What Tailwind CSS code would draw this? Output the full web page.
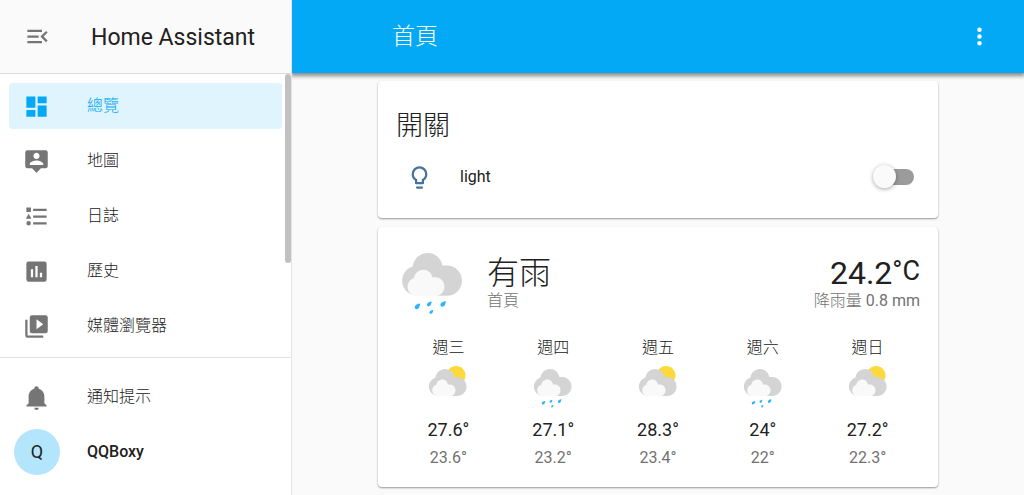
<!DOCTYPE html>
<html lang="zh-Hant">

<head>
    <meta charset="UTF-8">
    <meta name="viewport" content="width=device-width, initial-scale=1.0">
    <title>首頁 - Home Assistant</title>
    <script src="https://cdn.jsdelivr.net/npm/@tailwindcss/browser@4"></script>
</head>

<body class="h-screen flex overflow-hidden bg-[#fafafa] text-[#212121] text-base font-['Roboto','Noto_Sans_CJK_TC',sans-serif]">

    <!-- Weather icons -->
    <svg class="hidden">
        <symbol id="clouds" viewBox="0 0 17 17">
            <path fill="#d4d4d4" d="m3.8863 5.035c-0.54892 0.16898-1.04 0.46637-1.4372 0.8636-0.63077 0.63041-1.0206 1.4933-1.0206 2.455 0 1.9251 1.5589 3.4682 3.4837 3.4682h6.9688c1.9251 0 3.484-1.5981 3.484-3.5232 0-1.9251-1.5589-3.5232-3.484-3.5232h-1.0834c-0.25294-1.6916-1.6986-2.9083-3.4463-2.9083-1.7995 0-3.2805 1.4153-3.465 3.1679" />
            <path fill="#f9f9f9" d="m4.1996 7.6995c-0.33902 0.10407-0.64276 0.28787-0.88794 0.5334-0.39017 0.38982-0.63147 0.92322-0.63147 1.5176 0 1.1896 0.96414 2.1431 2.1537 2.1431h4.3071c1.1896 0 2.153-0.98742 2.153-2.1777 0-1.1896-0.96344-2.1777-2.153-2.1777h-0.66992c-0.15593-1.0449-1.0499-1.7974-2.1297-1.7974-1.112 0-2.0274 0.87524-2.1417 1.9586" />
        </symbol>
        <symbol id="rainy" viewBox="0 0 17 17">
            <use href="#clouds" />
            <g fill="#30b3ff">
                <path d="m5.2852 14.734c-0.22401 0.24765-0.57115 0.2988-0.77505 0.11395-0.20391-0.1845-0.18732-0.53481 0.036689-0.78281 0.14817-0.16298 0.59126-0.32914 0.87559-0.42369 0.12453-0.04092 0.22684 0.05186 0.19791 0.17956-0.065617 0.2921-0.18732 0.74965-0.33514 0.91299" />
                <path d="m11.257 14.163c-0.22437 0.24765-0.57115 0.2988-0.77505 0.11395-0.2039-0.1845-0.18768-0.53481 0.03669-0.78281 0.14817-0.16298 0.59126-0.32914 0.8756-0.42369 0.12453-0.04092 0.22684 0.05186 0.19791 0.17956-0.06562 0.2921-0.18732 0.74965-0.33514 0.91299" />
                <path d="m8.432 15.878c-0.15452 0.17039-0.3937 0.20567-0.53446 0.07867-0.14041-0.12735-0.12876-0.36865 0.025753-0.53975 0.10195-0.11218 0.40711-0.22684 0.60325-0.29175 0.085725-0.02858 0.15628 0.03563 0.13652 0.12382-0.045508 0.20108-0.12912 0.51647-0.23107 0.629" />
                <path d="m7.9991 14.118c-0.19226 0.21237-0.49001 0.25612-0.66499 0.09737-0.17462-0.15804-0.16051-0.45861 0.03175-0.67098 0.12665-0.14005 0.50729-0.28293 0.75071-0.36336 0.10689-0.03563 0.19473 0.0441 0.17004 0.15346-0.056092 0.25082-0.16051 0.64347-0.28751 0.78352" />
            </g>
        </symbol>
        <symbol id="partlycloudy" viewBox="0 0 17 17">
            <path fill="#fdd93c" d="m14.981 4.2112c0 1.9244-1.56 3.4844-3.484 3.4844-1.9244 0-3.4844-1.56-3.4844-3.4844s1.56-3.484 3.4844-3.484c1.924 0 3.484 1.5596 3.484 3.484" />
            <use href="#clouds" />
        </symbol>
    </svg>

    <!-- Sidebar -->
    <aside class="relative z-10 w-[292px] shrink-0 flex flex-col bg-white border-r border-[#e4e4e4]">
        <div class="h-[74px] shrink-0 flex items-center gap-10 pl-6 bg-[#fafafa] border-b border-[#dcdcdc]">
            <button aria-label="選單" class="text-[#757575]">
                <svg class="size-[27px]" viewBox="0 0 24 24" fill="currentColor"><path d="M21,15.61L19.59,17L14.58,12L19.59,7L21,8.39L17.44,12L21,15.61M3,6H16V8H3V6M3,13V11H13V13H3M3,18V16H16V18H3Z" /></svg>
            </button>
            <h1 class="pt-1 text-[23px]">Home Assistant</h1>
        </div>

        <nav class="relative flex-1 min-h-0 overflow-hidden flex flex-col gap-[9px] px-[9px] py-[9px] font-light">
            <a href="#" class="h-[46px] shrink-0 flex items-center gap-[37px] px-[14px] rounded bg-[#e0f4fe] text-[#03a9f4]">
                <svg class="size-[27px]" viewBox="0 0 24 24" fill="currentColor"><path d="M13,3V9H21V3M13,21H21V11H13M3,21H11V15H3M3,13H11V3H3V13Z" /></svg>
                <span>總覽</span>
            </a>
            <a href="#" class="h-[46px] shrink-0 flex items-center gap-[37px] px-[14px] rounded">
                <svg class="size-[27px] text-[#757575]" viewBox="0 0 24 24" fill="currentColor"><path d="M20,2H4A2,2 0 0,0 2,4V16A2,2 0 0,0 4,18H8L12,22L16,18H20A2,2 0 0,0 22,16V4A2,2 0 0,0 20,2M12,4.3C13.5,4.3 14.7,5.5 14.7,7C14.7,8.5 13.5,9.7 12,9.7C10.5,9.7 9.3,8.5 9.3,7C9.3,5.5 10.5,4.3 12,4.3M18,15H6V14.1C6,12.1 10,11 12,11C14,11 18,12.1 18,14.1V15Z" /></svg>
                <span>地圖</span>
            </a>
            <a href="#" class="h-[46px] shrink-0 flex items-center gap-[37px] px-[14px] rounded">
                <svg class="size-[27px] text-[#757575]" viewBox="0 0 24 24" fill="currentColor"><path d="M5,9.5L7.5,14H2.5L5,9.5M3,4H7V8H3V4M5,20A2,2 0 0,0 7,18A2,2 0 0,0 5,16A2,2 0 0,0 3,18A2,2 0 0,0 5,20M9,5V7H21V5H9M9,19H21V17H9V19M9,13H21V11H9V13Z" /></svg>
                <span>日誌</span>
            </a>
            <a href="#" class="h-[46px] shrink-0 flex items-center gap-[37px] px-[14px] rounded">
                <svg class="size-[27px] text-[#757575]" viewBox="0 0 24 24" fill="currentColor"><path d="M9,17H7V10H9V17M13,17H11V7H13V17M17,17H15V13H17V17M19,3H5A2,2 0 0,0 3,5V19A2,2 0 0,0 5,21H19A2,2 0 0,0 21,19V5A2,2 0 0,0 19,3Z" /></svg>
                <span>歷史</span>
            </a>
            <a href="#" class="h-[46px] shrink-0 flex items-center gap-[37px] px-[14px] rounded">
                <svg class="size-[27px] text-[#757575]" viewBox="0 0 24 24" fill="currentColor"><path d="M4,6H2V20A2,2 0 0,0 4,22H18V20H4V6M20,2H8A2,2 0 0,0 6,4V16A2,2 0 0,0 8,18H20A2,2 0 0,0 22,16V4A2,2 0 0,0 20,2M12,14.5V5.5L18,10L12,14.5Z" /></svg>
                <span>媒體瀏覽器</span>
            </a>
            <!-- Scroll thumb -->
            <div class="absolute top-0 right-0 w-[6px] h-[189px] rounded bg-[#c1c1c1]"></div>
        </nav>

        <div class="shrink-0 flex flex-col gap-[9px] px-[9px] pt-4 pb-5 border-t border-[#e0e0e0]">
            <a href="#" class="h-[46px] flex items-center gap-[37px] px-[14px] font-light">
                <svg class="size-[27px] text-[#757575]" viewBox="0 0 24 24" fill="currentColor"><path d="M21,19V20H3V19L5,17V11C5,7.9 7.03,5.17 10,4.29C10,4.19 10,4.1 10,4A2,2 0 0,1 12,2A2,2 0 0,1 14,4C14,4.1 14,4.19 14,4.29C16.97,5.17 19,7.9 19,11V17L21,19M14,21A2,2 0 0,1 12,23A2,2 0 0,1 10,21" /></svg>
                <span>通知提示</span>
            </a>
            <a href="#" class="h-[46px] flex items-center gap-[27px] px-[5px] font-medium">
                <span class="size-[46px] flex items-center justify-center rounded-full bg-[#b3e5fc] text-lg font-normal">Q</span>
                <span>QQBoxy</span>
            </a>
        </div>
    </aside>

    <!-- Content -->
    <div class="flex-1 min-w-0 flex flex-col">
        <header class="h-[73px] shrink-0 flex items-center justify-between pl-[100px] pr-[31px] bg-[#03a9f4] text-white shadow-[0_2px_4px_1px_rgba(0,0,0,0.45)]">
            <h2 class="pt-[2px] text-[23px] font-light">首頁</h2>
            <button aria-label="更多">
                <svg class="size-[27px]" viewBox="0 0 24 24" fill="currentColor"><path d="M12,16A2,2 0 0,1 14,18A2,2 0 0,1 12,20A2,2 0 0,1 10,18A2,2 0 0,1 12,16M12,10A2,2 0 0,1 14,12A2,2 0 0,1 12,14A2,2 0 0,1 10,12A2,2 0 0,1 12,10M12,4A2,2 0 0,1 14,6A2,2 0 0,1 12,8A2,2 0 0,1 10,6A2,2 0 0,1 12,4Z" /></svg>
            </button>
        </header>

        <main class="w-full max-w-[560px] mx-auto pt-2 flex flex-col gap-[9px]">
            <section class="px-[18px] pt-[25px] pb-[18px] rounded bg-white shadow-[0_1px_2px_rgba(0,0,0,0.4)]">
                <h3 class="text-[27px] leading-10 font-light">開關</h3>
                <div class="h-[46px] mt-2 flex items-center">
                    <svg class="size-[27px] ml-[10px] text-[#44739e]" viewBox="0 0 24 24" fill="currentColor"><path d="M12,2A7,7 0 0,1 19,9C19,11.38 17.81,13.47 16,14.74V17A1,1 0 0,1 15,18H9A1,1 0 0,1 8,17V14.74C6.19,13.47 5,11.38 5,9A7,7 0 0,1 12,2M9,21V20H15V21A1,1 0 0,1 14,22H10A1,1 0 0,1 9,21M12,4A5,5 0 0,0 7,9C7,11.05 8.23,12.81 10,13.58V16H14V13.58C15.77,12.81 17,11.05 17,9A5,5 0 0,0 12,4Z" /></svg>
                    <label for="light" class="flex-1 pl-[27px]">light</label>
                    <input type="checkbox" id="light" role="switch"
                        class="appearance-none relative w-10 h-4 mr-[6px] rounded-full bg-[#9b9b9b] before:absolute before:-top-1 before:-left-px before:size-[23px] before:rounded-full before:bg-[#fafafa] before:shadow-[0_1px_4px_rgba(0,0,0,0.35)] checked:bg-[#81d4fa] checked:before:left-5">
                </div>
            </section>

            <section class="px-[18px] pt-[18px] pb-[15px] rounded bg-white shadow-[0_1px_2px_rgba(0,0,0,0.4)]">
                <div class="flex items-center">
                    <svg class="size-[73px]"><use href="#rainy" /></svg>
                    <div class="flex-1 pt-[2px] pl-[18px] font-light">
                        <div class="text-[32px] leading-9">有雨</div>
                        <div class="leading-5 text-[#727272]">首頁</div>
                    </div>
                    <div class="pt-[2px] text-right">
                        <div class="flex justify-end items-start text-[32px] leading-9">24.2<span class="text-[27px] leading-8">°C</span></div>
                        <div class="leading-5 text-[#727272]"><span class="font-light">降雨量</span> 0.8 mm</div>
                    </div>
                </div>

                <div class="mt-[18px] flex text-center">
                    <div class="flex-1 flex flex-col items-center">
                        <div class="leading-6 font-light">週三</div>
                        <svg class="size-[46px] mt-1"><use href="#partlycloudy" /></svg>
                        <div class="mt-[6px] text-lg">27.6°</div>
                        <div class="text-[#727272] leading-7">23.6°</div>
                    </div>
                    <div class="flex-1 flex flex-col items-center">
                        <div class="leading-6 font-light">週四</div>
                        <svg class="size-[46px] mt-1"><use href="#rainy" /></svg>
                        <div class="mt-[6px] text-lg">27.1°</div>
                        <div class="text-[#727272] leading-7">23.2°</div>
                    </div>
                    <div class="flex-1 flex flex-col items-center">
                        <div class="leading-6 font-light">週五</div>
                        <svg class="size-[46px] mt-1"><use href="#partlycloudy" /></svg>
                        <div class="mt-[6px] text-lg">28.3°</div>
                        <div class="text-[#727272] leading-7">23.4°</div>
                    </div>
                    <div class="flex-1 flex flex-col items-center">
                        <div class="leading-6 font-light">週六</div>
                        <svg class="size-[46px] mt-1"><use href="#rainy" /></svg>
                        <div class="mt-[6px] text-lg">24°</div>
                        <div class="text-[#727272] leading-7">22°</div>
                    </div>
                    <div class="flex-1 flex flex-col items-center">
                        <div class="leading-6 font-light">週日</div>
                        <svg class="size-[46px] mt-1"><use href="#partlycloudy" /></svg>
                        <div class="mt-[6px] text-lg">27.2°</div>
                        <div class="text-[#727272] leading-7">22.3°</div>
                    </div>
                </div>
            </section>
        </main>
    </div>

</body>

</html>
